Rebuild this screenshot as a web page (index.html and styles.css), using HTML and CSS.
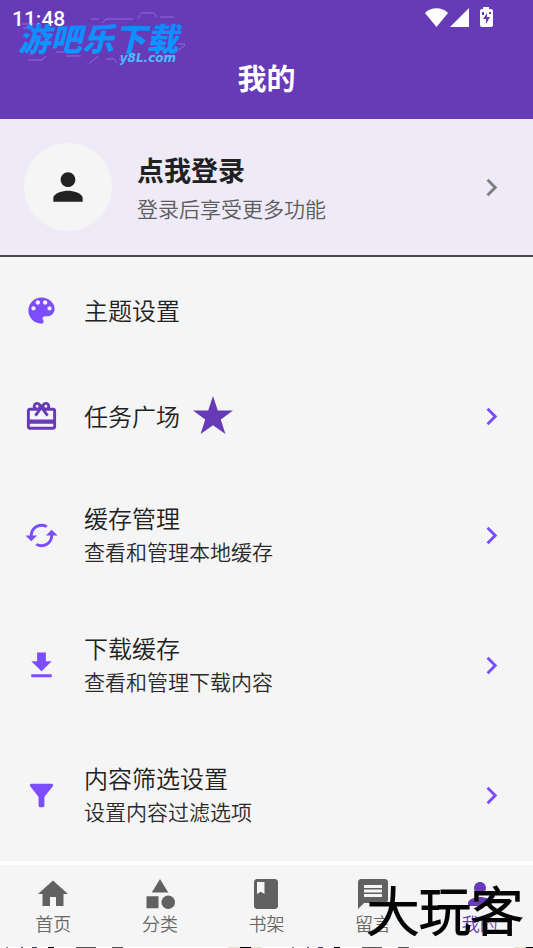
FILE: index.html
```html
<!DOCTYPE html>
<html lang="zh-CN">
<head>
<meta charset="utf-8">
<meta name="viewport" content="width=device-width, initial-scale=1">
<title>我的</title>
<link rel="stylesheet" href="styles.css">
</head>
<body>
<div class="app">
  <header class="header">
    <div class="status">
      <time>11:48</time>
      <svg class="status-icons" viewBox="0 0 68 22" aria-hidden="true">
        <path d="M0 6C6-.2 17-.2 23 6L11.500 20z"/>
        <path d="M44 1v19H25z"/>
        <path fill-rule="evenodd" d="M58 0h6v2h2q2 0 2 2v14q0 2-2 2H57q-2 0-2-2V4q0-2 2-2h1zM57 5v3h2V5zm7 0v2h2V5zm-2 1l-4 6h3v5l4-7h-3z"/>
      </svg>
    </div>
    <h1>我的</h1>
    <div class="brand">
      <svg class="brand-lines" viewBox="0 0 180 60" aria-hidden="true">
        <path d="M94 13l4-4h27M130 9l2-4M132 3h14l3 4M152 7h14M14 14h12M24 18h-9M31 31h-9M20 50h14l4-4M22 44h4M48 42h8M58 46h15M81 54l9-8M98 49h8l3 4M114 51l-3-2M168 42l9-7M156 46h11M91 9h-8M170 34h7"/>
      </svg>
      <span class="brand-name">游吧乐下载</span>
      <span class="brand-url">y8L.com</span>
    </div>
  </header>
  <main>
    <a class="login" href="#login">
      <span class="avatar"><svg viewBox="0 0 24 24" aria-hidden="true"><path d="M12 12c2.210 0 4-1.790 4-4s-1.790-4-4-4-4 1.790-4 4 1.790 4 4 4zm0 2c-2.670 0-8 1.340-8 4v2h16v-2c0-2.660-5.330-4-8-4z"/></svg></span>
      <span class="text"><strong>点我登录</strong><small>登录后享受更多功能</small></span>
      <svg class="icon chevron" viewBox="0 0 24 24" aria-hidden="true"><path d="M10 6L8.590 7.410 13.170 12l-4.580 4.590L10 18l6-6z"/></svg>
    </a>
    <ul class="menu">
      <li><a class="row single" href="#theme">
        <svg class="icon" viewBox="0 0 24 24" aria-hidden="true"><path d="M12 3c-4.970 0-9 4.030-9 9s4.030 9 9 9c.83 0 1.500-.67 1.500-1.500 0-.39-.15-.74-.39-1.010-.23-.26-.38-.61-.38-.99 0-.83.67-1.500 1.500-1.500H16c2.760 0 5-2.240 5-5 0-4.420-4.030-8-9-8zm-5.500 9c-.83 0-1.500-.67-1.500-1.500S5.670 9 6.500 9 8 9.670 8 10.500 7.330 12 6.500 12zm3-4C8.670 8 8 7.330 8 6.500S8.670 5 9.500 5s1.500.67 1.500 1.500S10.330 8 9.500 8zm5 0c-.83 0-1.500-.67-1.500-1.500S13.670 5 14.500 5s1.500.67 1.500 1.500S15.330 8 14.500 8zm3 4c-.83 0-1.500-.67-1.500-1.500S16.670 9 17.500 9s1.500.67 1.500 1.500-.67 1.500-1.500 1.500z"/></svg>
        <span class="text"><b>主题设置</b></span>
      </a></li>
      <li><a class="row single" href="#tasks">
        <svg class="icon deep" viewBox="0 0 24 24" aria-hidden="true"><path d="M20 6h-2.180c.11-.31.18-.65.18-1 0-1.660-1.340-3-3-3-1.050 0-1.960.54-2.500 1.350l-.5.67-.5-.68C10.960 2.540 10.050 2 9 2 7.340 2 6 3.340 6 5c0 .35.07.69.18 1H4c-1.110 0-1.990.89-1.990 2L2 19c0 1.110.89 2 2 2h16c1.110 0 2-.89 2-2V8c0-1.110-.89-2-2-2zm-5-2c.55 0 1 .45 1 1s-.45 1-1 1-1-.45-1-1 .45-1 1-1zM9 4c.55 0 1 .45 1 1s-.45 1-1 1-1-.45-1-1 .45-1 1-1zm11 15H4v-2h16v2zm0-5H4V8h5.080L7 10.830 8.620 12 11 8.760l1-1.360 1 1.360L15.380 12 17 10.830 14.920 8H20v6z"/></svg>
        <span class="text with-star"><b>任务广场</b><svg class="star" viewBox="0 0 24 24" aria-hidden="true"><path d="M12 2l2.400 7.200H22l-6.100 4.600L18.200 21 12 16.600 5.800 21l2.300-7.200L2 9.200h7.600z"/></svg></span>
        <svg class="icon chevron" viewBox="0 0 24 24" aria-hidden="true"><path d="M10 6L8.590 7.410 13.170 12l-4.580 4.590L10 18l6-6z"/></svg>
      </a></li>
      <li><a class="row" href="#cache">
        <svg class="icon" viewBox="0 0 24 24" aria-hidden="true"><path d="M19 8l-4 4h3c0 3.310-2.690 6-6 6-1.010 0-1.970-.25-2.800-.7l-1.460 1.460C8.970 19.540 10.430 20 12 20c4.420 0 8-3.580 8-8h3l-4-4zM6 12c0-3.310 2.690-6 6-6 1.010 0 1.970.25 2.800.7l1.460-1.460C15.030 4.460 13.570 4 12 4c-4.420 0-8 3.580-8 8H1l4 4 4-4H6z"/></svg>
        <span class="text"><b>缓存管理</b><small>查看和管理本地缓存</small></span>
        <svg class="icon chevron" viewBox="0 0 24 24" aria-hidden="true"><path d="M10 6L8.590 7.410 13.170 12l-4.580 4.590L10 18l6-6z"/></svg>
      </a></li>
      <li><a class="row" href="#downloads">
        <svg class="icon" viewBox="0 0 24 24" aria-hidden="true"><path d="M19 9h-4V3H9v6H5l7 7 7-7zM5 18v2h14v-2H5z"/></svg>
        <span class="text"><b>下载缓存</b><small>查看和管理下载内容</small></span>
        <svg class="icon chevron" viewBox="0 0 24 24" aria-hidden="true"><path d="M10 6L8.590 7.410 13.170 12l-4.580 4.590L10 18l6-6z"/></svg>
      </a></li>
      <li><a class="row" href="#filter">
        <svg class="icon" viewBox="0 0 24 24" aria-hidden="true"><path d="M4.250 5.610C6.270 8.200 10 13 10 13v6c0 .55.45 1 1 1h2c.55 0 1-.45 1-1v-6s3.720-4.800 5.740-7.390c.51-.66.04-1.610-.79-1.610H5.040c-.83 0-1.300.95-.79 1.610z"/></svg>
        <span class="text"><b>内容筛选设置</b><small>设置内容过滤选项</small></span>
        <svg class="icon chevron" viewBox="0 0 24 24" aria-hidden="true"><path d="M10 6L8.590 7.410 13.170 12l-4.580 4.590L10 18l6-6z"/></svg>
      </a></li>
    </ul>
  </main>
  <nav class="tabs">
    <a href="#home"><svg class="tab-icon" viewBox="0 0 24 24" aria-hidden="true"><path d="M10 20v-6h4v6h5v-8h3L12 3 2 12h3v8z"/></svg>首页</a>
    <a href="#category"><svg class="tab-icon" viewBox="0 0 24 24" aria-hidden="true"><path d="M12 2l-5.500 9h11zM3 13.500h8v8H3z"/><circle cx="17.500" cy="17.500" r="4.500"/></svg>分类</a>
    <a href="#shelf"><svg class="tab-icon" viewBox="0 0 24 24" aria-hidden="true"><path d="M18 2H6c-1.100 0-2 .9-2 2v16c0 1.100.9 2 2 2h12c1.100 0 2-.9 2-2V4c0-1.100-.9-2-2-2zM6 4h5v8l-2.500-1.500L6 12V4z"/></svg>书架</a>
    <a href="#messages"><svg class="tab-icon" viewBox="0 0 24 24" aria-hidden="true"><path d="M20 2H4c-1.100 0-1.990.9-1.990 2L2 22l4-4h14c1.100 0 2-.9 2-2V4c0-1.100-.9-2-2-2zm-2 12H6v-2h12v2zm0-3H6V9h12v2zm0-3H6V6h12v2z"/></svg>留言</a>
    <a class="active" href="#me" aria-current="page"><svg class="tab-icon" viewBox="0 0 24 24" aria-hidden="true"><path d="M12 12c2.210 0 4-1.790 4-4s-1.790-4-4-4-4 1.790-4 4 1.790 4 4 4zm0 2c-2.670 0-8 1.340-8 4v2h16v-2c0-2.660-5.330-4-8-4z"/></svg>我的</a>
    <span class="stamp">大玩客</span>
  </nav>
  <div class="edge"></div>
</div>
</body>
</html>
```
FILE: styles.css
```css
* { box-sizing: border-box; }

body {
  margin: 0;
  background: #f5f5f5;
  color: #212121;
  font-family: "Noto Sans CJK SC", sans-serif;
  font-weight: 350;
}

a { color: inherit; text-decoration: none; }
svg { display: block; fill: currentColor; flex: none; }

.app {
  min-height: 100vh;
  display: flex;
  flex-direction: column;
}

.header {
  position: relative;
  background: #673ab7;
  color: #fff;
  padding-bottom: 22px;
}

.status {
  display: flex;
  justify-content: space-between;
  align-items: center;
  height: 38px;
  padding: 0 40px 0 12px;
  font: 500 21px/38px Roboto, sans-serif;
}

.status-icons { width: 68px; height: 22px; margin-bottom: 2px; }

h1 {
  margin: 0;
  padding-top: 19px;
  text-align: center;
  font-size: 29px;
  line-height: 40px;
  font-weight: 600;
}

.brand {
  position: absolute;
  left: 8px;
  top: 10px;
  width: 180px;
  height: 60px;
  font-style: italic;
  font-weight: 700;
}

.brand-lines {
  position: absolute;
  inset: 0;
  fill: none;
  stroke: #aa90e8;
  stroke-width: 1;
  opacity: .6;
}

.brand-name {
  position: absolute;
  left: 10px;
  top: 7px;
  padding-right: 8px;
  font-size: 32px;
  line-height: 40px;
  font-weight: 900;
  white-space: nowrap;
  background: linear-gradient(#1683ff, #0a9dff);
  background-clip: text;
  color: transparent;
}

.brand-url {
  position: absolute;
  right: 12px;
  top: 39px;
  font-family: "DejaVu Sans", sans-serif;
  font-size: 12px;
  line-height: 18px;
  color: #4bbcff;
}

.login {
  display: flex;
  align-items: center;
  padding: 24px;
  background: #eeeaf8;
  border-bottom: 2px solid #4a4850;
}

.avatar {
  display: grid;
  place-items: center;
  width: 88px;
  height: 88px;
  margin-right: 25px;
  border-radius: 50%;
  background: #f5f5f5;
}

.avatar svg { width: 44px; height: 44px; }

.text { flex: 1; display: flex; flex-direction: column; }
.text b { font-size: 24px; line-height: 36px; font-weight: inherit; }
.text small { font-size: 21px; line-height: 30px; color: #2a2a2a; }

.login .text { padding-top: 2px; }
.login strong { font-size: 27px; line-height: 40px; font-weight: 700; }
.login small { line-height: 36px; color: #5c5c5c; }
.login .chevron { color: #808080; }

.menu { list-style: none; margin: 0; padding: 0; }

.row {
  display: flex;
  align-items: center;
  padding: 31px 24px 29px;
  color: #212121;
}

.row .text { margin-left: 25px; padding-bottom: 4px; }
.row.single { padding-top: 29px; }
.row.single .text { min-height: 48px; padding-bottom: 0; justify-content: center; }
.row .text.with-star { flex-direction: row; justify-content: flex-start; align-items: center; gap: 9px; }

.icon { width: 35px; height: 35px; color: #7c4dff; }
.icon.deep, .star { color: #673ab7; }
.star { width: 48px; height: 48px; }

.tabs {
  position: relative;
  display: flex;
  margin-top: auto;
  border-top: 4px solid #fff;
  background: #f5f5f5;
}

.tabs a {
  flex: 1;
  display: flex;
  flex-direction: column;
  align-items: center;
  padding: 11px 0 13px;
  font-size: 18px;
  line-height: 22px;
  color: #686868;
}

.tab-icon { width: 36px; height: 36px; color: #616161; }
.tabs .active, .active .tab-icon { color: #673ab7; }

.stamp {
  position: absolute;
  right: 10px;
  bottom: 6px;
  font-size: 52px;
  line-height: 64px;
  font-weight: 300;
  color: #050508;
  text-shadow: 0 0 2px #e8dfc0;
  -webkit-text-stroke: 2px #050508;
  stroke-linejoin: round;
  pointer-events: none;
}

.edge {
  height: 1px;
  background: repeating-linear-gradient(90deg, #fff 0 6px, #777 6px 8px, #fff 8px 21px, #446 21px 23px, #fff 23px 32px, #446 32px 37px, #fff 37px 48px, #000 48px 54px, #fff 54px 76px, #555 76px 96px, #fff 96px 112px, #555 112px 123px, #fff 123px 228px, #eee0c8 228px 240px, #000 240px 251px, #eee0c8 251px 262px, #fff 262px 286px);
}
```
